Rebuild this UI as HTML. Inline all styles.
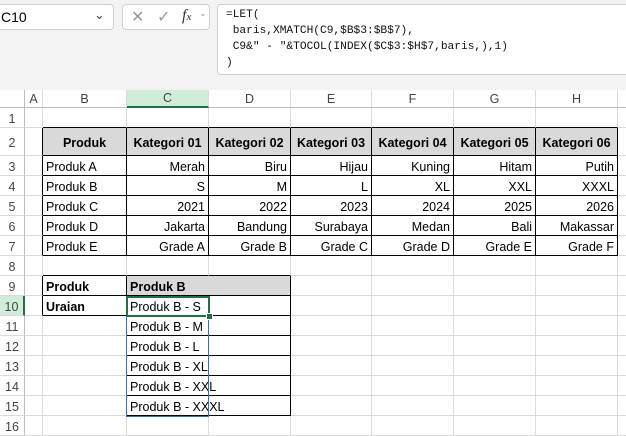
<!DOCTYPE html>
<html><head><style>
body{margin:0;width:626px;height:422px;overflow:hidden;background:#fff;font-family:"Liberation Sans",Arial,sans-serif;position:relative}
.box{position:absolute;border:1px solid #d0d0d0;border-radius:4px;background:#fff}
#top{position:absolute;left:0;top:0;width:626px;height:90px;background:#f3f3f3}
table{position:absolute;left:0;top:90px;width:638px;border-collapse:separate;border-spacing:0;table-layout:fixed}
td{border-right:1px solid #dadada;border-bottom:1px solid #dadada;padding:2px 3px 0;font-size:12.5px;white-space:nowrap;overflow:hidden;box-sizing:border-box;height:20px;color:#000}
tr.h td{height:18px;padding-top:0;text-align:center;color:#444;font-size:12.5px;border-bottom:1px solid #bdbdbd}
td.rh{text-align:center;color:#444;border-right:1px solid #bdbdbd;padding-left:0;padding-right:0}
.r{text-align:right}.c{text-align:center}
.b{font-weight:bold}
.g{background:#d9d9d9}
.kr{border-right:1px solid #000}.kb{border-bottom:1px solid #000}
.sel{background:#d2ecda;color:#1e6b3b}
</style></head><body>
<div id="top"></div>
<div class="box" style="left:-6px;top:4px;width:118px;height:24px"><span style="position:absolute;left:6px;top:4px;font-size:14px">C10</span><span style="position:absolute;left:99px;top:2px;font-size:13px;color:#444">&#8964;</span></div>
<div class="box" style="left:122px;top:4px;width:86px;height:24px;color:#999;font-size:16px"><span style="position:absolute;left:8px;top:2px">&#10005;</span><span style="position:absolute;left:34px;top:2px">&#10003;</span><span style="position:absolute;left:59px;top:2px;color:#333;font-style:italic;font-family:'Liberation Serif',serif">f<span style="font-size:11px">x</span></span><span style="position:absolute;left:76px;top:3px;font-size:9px">&#8964;</span></div>
<div class="box" style="left:217px;top:4px;width:420px;height:69px"><pre style="margin:0;position:absolute;left:8px;top:2px;font-family:'Liberation Mono',monospace;font-size:11.2px;line-height:16px;color:#111">=LET(
 baris,XMATCH(C9,$B$3:$B$7),
 C9&amp;" - "&amp;TOCOL(INDEX($C$3:$H$7,baris,),1)
)</pre></div>
<table>
<colgroup><col style="width:25px"><col style="width:18px"><col style="width:84px"><col style="width:82px"><col style="width:82px"><col style="width:81px"><col style="width:82px"><col style="width:82px"><col style="width:82px"><col style="width:20px"></colgroup>
<tr class="h"><td style="border-right:1px solid #bdbdbd"></td><td>A</td><td>B</td><td class="sel" style="border-bottom:2px solid #1e7145">C</td><td>D</td><td>E</td><td>F</td><td>G</td><td>H</td><td></td></tr>
<tr><td class="rh">1</td><td></td><td class="kb"></td><td class="kb"></td><td class="kb"></td><td class="kb"></td><td class="kb"></td><td class="kb"></td><td class="kb"></td><td></td></tr>
<tr><td class="rh" style="height:28px">2</td><td class="kr"></td><td class="g b c kr kb">Produk</td><td class="g b c kr kb">Kategori 01</td><td class="g b c kr kb">Kategori 02</td><td class="g b c kr kb">Kategori 03</td><td class="g b c kr kb">Kategori 04</td><td class="g b c kr kb">Kategori 05</td><td class="g b c kr kb">Kategori 06</td><td></td></tr>
<tr><td class="rh">3</td><td class="kr"></td><td class="kr kb">Produk A</td><td class="r kr kb">Merah</td><td class="r kr kb">Biru</td><td class="r kr kb">Hijau</td><td class="r kr kb">Kuning</td><td class="r kr kb">Hitam</td><td class="r kr kb">Putih</td><td></td></tr>
<tr><td class="rh">4</td><td class="kr"></td><td class="kr kb">Produk B</td><td class="r kr kb">S</td><td class="r kr kb">M</td><td class="r kr kb">L</td><td class="r kr kb">XL</td><td class="r kr kb">XXL</td><td class="r kr kb">XXXL</td><td></td></tr>
<tr><td class="rh">5</td><td class="kr"></td><td class="kr kb">Produk C</td><td class="r kr kb">2021</td><td class="r kr kb">2022</td><td class="r kr kb">2023</td><td class="r kr kb">2024</td><td class="r kr kb">2025</td><td class="r kr kb">2026</td><td></td></tr>
<tr><td class="rh">6</td><td class="kr"></td><td class="kr kb">Produk D</td><td class="r kr kb">Jakarta</td><td class="r kr kb">Bandung</td><td class="r kr kb">Surabaya</td><td class="r kr kb">Medan</td><td class="r kr kb">Bali</td><td class="r kr kb">Makassar</td><td></td></tr>
<tr><td class="rh">7</td><td class="kr"></td><td class="kr kb">Produk E</td><td class="r kr kb">Grade A</td><td class="r kr kb">Grade B</td><td class="r kr kb">Grade C</td><td class="r kr kb">Grade D</td><td class="r kr kb">Grade E</td><td class="r kr kb">Grade F</td><td></td></tr>
<tr><td class="rh">8</td><td></td><td class="kb"></td><td class="kb"></td><td class="kb"></td><td></td><td></td><td></td><td></td><td></td></tr>
<tr><td class="rh">9</td><td class="kr"></td><td class="b kr kb">Produk</td><td colspan="2" class="b g kr kb">Produk B</td><td></td><td></td><td></td><td></td><td></td></tr>
<tr><td class="rh sel" style="border-right:2px solid #1e7145">10</td><td class="kr"></td><td class="b kr kb">Uraian</td><td colspan="2" class="kr kb">Produk B - S</td><td></td><td></td><td></td><td></td><td></td></tr>
<tr><td class="rh">11</td><td></td><td class="kr"></td><td colspan="2" class="kr kb">Produk B - M</td><td></td><td></td><td></td><td></td><td></td></tr>
<tr><td class="rh">12</td><td></td><td class="kr"></td><td colspan="2" class="kr kb">Produk B - L</td><td></td><td></td><td></td><td></td><td></td></tr>
<tr><td class="rh">13</td><td></td><td class="kr"></td><td colspan="2" class="kr kb">Produk B - XL</td><td></td><td></td><td></td><td></td><td></td></tr>
<tr><td class="rh">14</td><td></td><td class="kr"></td><td colspan="2" class="kr kb">Produk B - XXL</td><td></td><td></td><td></td><td></td><td></td></tr>
<tr><td class="rh">15</td><td></td><td class="kr"></td><td colspan="2" class="kr kb">Produk B - XXXL</td><td></td><td></td><td></td><td></td><td></td></tr>
<tr><td class="rh">16</td><td></td><td></td><td></td><td></td><td></td><td></td><td></td><td></td><td></td></tr>
</table>
<div style="position:absolute;left:126px;top:296px;width:83px;height:121px;border:1px solid #2f6fd0;box-sizing:border-box"></div>
<div style="position:absolute;left:126px;top:296px;width:84px;height:21px;border:2px solid #1e7145;box-sizing:border-box"></div>
<div style="position:absolute;left:206px;top:313px;width:5px;height:5px;background:#1e7145;border:1px solid #fff"></div>
</body></html>
